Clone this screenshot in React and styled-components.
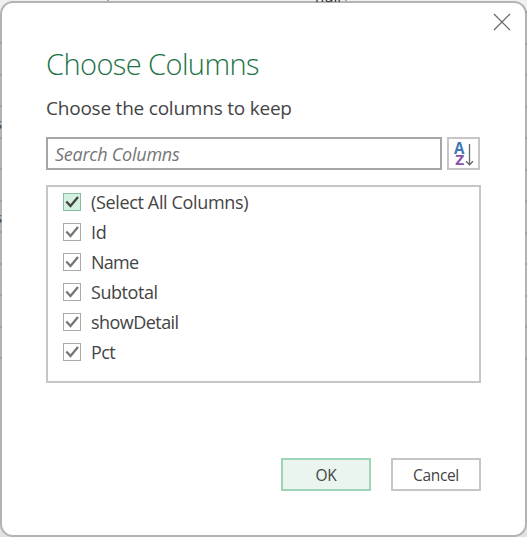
import React from "react";
import styled, { createGlobalStyle } from "styled-components";

const GlobalStyle = createGlobalStyle`
  * { box-sizing: border-box; }
  body { margin: 0; overflow: hidden; background: #efefef; }
`;

const Stage = styled.div`
  position: relative;
  width: 527px;
  height: 537px;
  overflow: hidden;
  background: linear-gradient(#f0f0f0, #e2e2e2);
  font-family: "Open Sans", "Noto Sans", sans-serif;
  color: #444;
`;

const SheetLine = styled.i`
  position: absolute;
  top: 0;
  left: ${(p) => p.$x}px;
  width: 2px;
  height: 3px;
  background: #a8a8a8;
`;

const SheetText = styled.span`
  position: absolute;
  z-index: 1;
  left: ${(p) => p.$x}px;
  top: ${(p) => p.$y}px;
  font-size: 15px;
  line-height: 20px;
  color: #333;
`;

const EdgeText = styled.span`
  position: absolute;
  left: -5px;
  top: ${(p) => p.$y}px;
  font-size: 15px;
  line-height: 18px;
  color: #444;
`;

const Dialog = styled.section`
  position: relative;
  display: flex;
  flex-direction: column;
  width: 527px;
  height: 536px;
  margin-top: 1px;
  padding: 43px 44px 0;
  border: 2px solid #b3b3b3;
  border-radius: 13px;
  background: #fff;
`;

const RowTicks = styled.div`
  position: absolute;
  left: ${(p) => (p.$right ? "525px" : "0")};
  top: ${(p) => (p.$right ? "11px" : "42px")};
  width: 2px;
  height: ${(p) => (p.$right ? "349px" : "318px")};
  background: repeating-linear-gradient(#a0a0a0 0 2px, transparent 2px 31.55px);
`;

const CloseButton = styled.button`
  position: absolute;
  top: 10px;
  right: 14px;
  width: 18px;
  height: 18px;
  padding: 0;
  border: 0;
  background: none;
  svg { display: block; }
`;

const Title = styled.h1`
  margin: 0;
  height: 36px;
  font-size: 29px;
  line-height: 36px;
  font-weight: 300;
  letter-spacing: -0.58px;
  white-space: nowrap;
  color: #217346;
`;

const Subtitle = styled.p`
  margin: 12px 0 0;
  height: 28px;
  font-size: 19px;
  line-height: 28px;
  letter-spacing: -0.22px;
  white-space: nowrap;
`;

const SearchRow = styled.div`
  display: flex;
  gap: 5px;
  height: 33px;
  margin-top: 15px;
`;

const SearchBox = styled.div`
  flex: 0 0 396px;
  padding-left: 7px;
  border: 2px solid #a6a6a6;
  font-size: 18px;
  line-height: 30px;
  font-style: italic;
  letter-spacing: -0.25px;
  color: #767676;
`;

const SortButton = styled.button`
  width: 33px;
  height: 33px;
  padding: 0;
  border: 2px solid #c6c6c6;
  background: #fff;
  svg { display: block; overflow: visible; }
`;

const ColumnList = styled.ul`
  width: 435px;
  height: 198px;
  margin: 15px 0 0;
  padding: 0 0 0 15px;
  border: 2px solid #c6c6c6;
  list-style: none;
`;

const ColumnRow = styled.li`
  display: flex;
  align-items: center;
  gap: 10px;
  height: 30px;
  font-size: 18px;
  line-height: 30px;
  letter-spacing: ${(p) => p.$tracking}px;
  white-space: nowrap;
`;

const CheckBox = styled.span`
  width: 18px;
  height: 18px;
  border: 1px solid ${(p) => (p.$active ? "#86bfa0" : "#ababab")};
  background: ${(p) => (p.$active ? "#d3f0e0" : "#fff")};
  color: ${(p) => (p.$active ? "#444" : "#777")};
  svg { display: block; }
`;

const Actions = styled.footer`
  display: flex;
  justify-content: flex-end;
  gap: 20px;
  margin-top: 75px;
`;

const ActionButton = styled.button`
  width: 90px;
  height: 33px;
  padding: 1px 0 0;
  border: 2px solid ${(p) => (p.$primary ? "#9fd5b7" : "#c6c6c6")};
  background: ${(p) => (p.$primary ? "#e9f5ee" : "#fff")};
  font: 15.5px/28px "Open Sans", "Noto Sans", sans-serif;
  letter-spacing: -0.35px;
  color: #444;
`;

const COLUMNS = [
  { name: "(Select All Columns)", active: true, tracking: -0.35 },
  { name: "Id", tracking: -0.3 },
  { name: "Name", tracking: -0.75 },
  { name: "Subtotal", tracking: -0.45 },
  { name: "showDetail", tracking: -0.55 },
  { name: "Pct", tracking: -0.6 },
];

function CheckMark() {
  return (
    <svg width="16" height="16" viewBox="0 0 16 16" fill="none">
      <path d="M2.3 7.5L6.5 12L14 3" stroke="currentColor" strokeWidth="2.3" />
    </svg>
  );
}

function SortIcon() {
  return (
    <svg width="29" height="29" viewBox="0 0 29 29">
      <text x="5.1" y="15" fontFamily="Open Sans" fontWeight="700" fontSize="15.5" textLength="10.5" lengthAdjust="spacingAndGlyphs" fill="#3f79b5">A</text>
      <text x="6.2" y="26.3" fontFamily="Open Sans" fontWeight="700" fontSize="14" textLength="9" lengthAdjust="spacingAndGlyphs" fill="#8652ac">Z</text>
      <path d="M20.5 5V25.5M17 22.3L20.5 25.8L24 22.3" fill="none" stroke="#666" strokeWidth="1.3" />
    </svg>
  );
}

export default function App() {
  return (
    <Stage>
      <GlobalStyle />
      <SheetLine $x={107} />
      <SheetLine $x={345} />
      <SheetText $x={315} $y={-14}>null</SheetText>
      <Dialog>
        <CloseButton aria-label="Close">
          <svg width="18" height="18" viewBox="0 0 18 18">
            <path d="M1 1L17 17M17 1L1 17" stroke="#666" strokeWidth="1.2" />
          </svg>
        </CloseButton>
        <Title>Choose Columns</Title>
        <Subtitle>Choose the columns to keep</Subtitle>
        <SearchRow>
          <SearchBox>Search Columns</SearchBox>
          <SortButton aria-label="Sort"><SortIcon /></SortButton>
        </SearchRow>
        <ColumnList>
          {COLUMNS.map((c) => (
            <ColumnRow key={c.name} $tracking={c.tracking}>
              <CheckBox $active={c.active}><CheckMark /></CheckBox>
              <span>{c.name}</span>
            </ColumnRow>
          ))}
        </ColumnList>
        <Actions>
          <ActionButton $primary>OK</ActionButton>
          <ActionButton>Cancel</ActionButton>
        </Actions>
      </Dialog>
      <RowTicks />
      <RowTicks $right />
      <EdgeText $y={114}>s</EdgeText>
      <EdgeText $y={208}>s</EdgeText>
      <EdgeText $y={237}>-</EdgeText>
    </Stage>
  );
}
